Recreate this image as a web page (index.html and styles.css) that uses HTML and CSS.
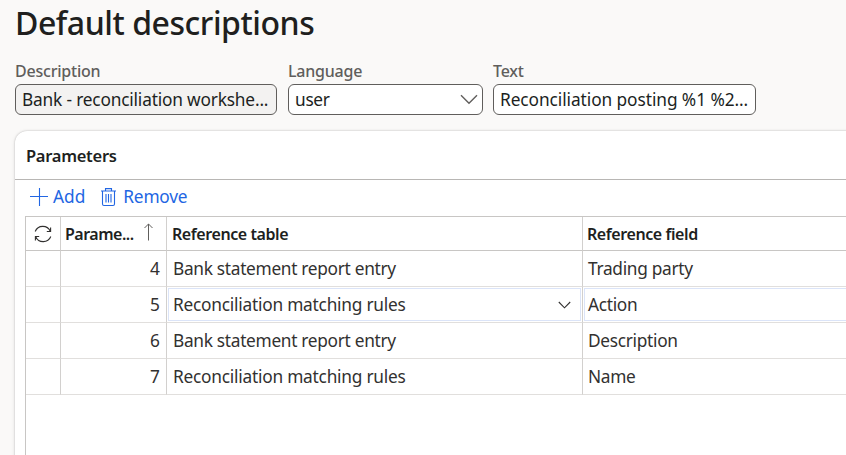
FILE: index.html
```html
<!DOCTYPE html>
<html lang="en">
<head>
<meta charset="utf-8">
<title>Default descriptions</title>
<link rel="stylesheet" href="styles.css">
</head>
<body>
<main class="page">
  <h1 class="title">Default descriptions</h1>
  <div class="fields">
    <div class="field field-description"><span class="label">Description</span><div class="input readonly"><span class="v-desc">Bank - reconciliation workshe...</span></div></div>
    <div class="field field-language"><span class="label">Language</span><div class="input"><span>user</span><svg class="chevron" width="18" height="11" viewBox="0 0 18 11"><path d="M1 1.3 9 9.2 17 1.3"/></svg></div></div>
    <div class="field field-text"><span class="label">Text</span><div class="input"><span class="v-text">Reconciliation posting %1 %2...</span></div></div>
  </div>
  <section class="card">
    <h2 class="card-title">Parameters</h2>
    <div class="toolbar">
      <span class="action"><svg class="plus" width="19" height="18" viewBox="0 0 19 18"><path d="M0 8.5H18M9.5 0V18"/></svg><span class="t-add">Add</span></span>
      <span class="action"><svg class="trash" width="16" height="19" viewBox="0 0 16 19"><path d="M1 3H16M5.5 3V.6H11.5V3M2.5 3V16Q2.5 17.5 4 17.5H13Q14.5 17.5 14.5 16V3M6 6V14.5M8.5 6V14.5M11 6V14.5"/></svg><span class="t-remove">Remove</span></span>
    </div>
    <div class="grid">
      <div class="row head">
        <div class="cell"><svg class="refresh" width="18" height="18" viewBox="0 0 18 18"><path d="M1.2 6.5A8.2 8.2 0 0 1 16.3 6.3M16.6 2.5V6.5H12.8M16.8 11.5A8.2 8.2 0 0 1 1.7 11.7M1.4 15.5V11.5H5.2"/></svg></div>
        <div class="cell"><span class="t-parame">Parame...</span><svg class="sort" width="10" height="18" viewBox="0 0 10 18"><path d="M4.5 .8V17.5M.5 5 4.5 1 8.5 5"/></svg></div>
        <div class="cell table-cell">Reference table</div>
        <div class="cell">Reference field</div>
      </div>
      <div class="row"><div class="cell"></div><div class="cell num">4</div><div class="cell table-cell">Bank statement report entry</div><div class="cell">Trading party</div></div>
      <div class="row"><div class="cell"></div><div class="cell num">5</div><div class="cell table-cell edit"><span class="t-rules">Reconciliation matching rules</span><svg class="drop" width="13" height="8" viewBox="0 0 13 8"><path d="M.8 1 6.5 6.8 12.2 1"/></svg></div><div class="cell edit">Action</div></div>
      <div class="row"><div class="cell"></div><div class="cell num">6</div><div class="cell table-cell">Bank statement report entry</div><div class="cell">Description</div></div>
      <div class="row"><div class="cell"></div><div class="cell num">7</div><div class="cell table-cell"><span class="t-rules">Reconciliation matching rules</span></div><div class="cell">Name</div></div>
    </div>
  </section>
</main>
</body>
</html>
```
FILE: styles.css
```css
* { box-sizing: border-box; }
body { margin: 0; width: 846px; height: 455px; overflow: hidden; background: #faf9f8; color: #323130; font: 17.3px/24px "Noto Sans", "Open Sans", sans-serif; white-space: nowrap; letter-spacing: -0.3px; }
.page { height: 455px; padding-left: 15px; display: flex; flex-direction: column; overflow: hidden; }
.title { flex: none; margin: 0; height: 60px; padding-top: 1px; font-size: 32px; line-height: 44px; font-weight: 500; letter-spacing: -0.45px; color: #201f1e; }
.fields { flex: none; display: flex; height: 71px; }
.field { display: flex; flex-direction: column; }
.field-description { width: 262px; margin-right: 11px; }
.field-language { width: 195px; margin-right: 10px; }
.field-text { width: 263px; }
.label { height: 24px; line-height: 23px; font-size: 16px; font-weight: 500; letter-spacing: -0.22px; color: #605e5c; }
.input { height: 31px; border: 1px solid #605e5c; border-radius: 6px; background: #fff; color: #201f1e; padding: 0 4px 0 6px; display: flex; align-items: center; justify-content: space-between; }
.readonly { background: #f3f2f1; }
.v-desc { letter-spacing: -0.18px; }
.v-text { letter-spacing: -0.07px; }
svg { fill: none; flex: none; }
.chevron { stroke: #605e5c; stroke-width: 1.4; }
.card { flex: none; width: 860px; height: 340px; background: #fff; border-radius: 12px 0 0 0; box-shadow: 0 0 2px rgba(0,0,0,.25), 0 1px 5px rgba(0,0,0,.08); }
.card-title { margin: 0; height: 49px; padding-left: 11px; line-height: 49px; font-size: 16.5px; font-weight: 600; letter-spacing: -0.28px; color: #201f1e; border-bottom: 1px solid #b8b6b4; }
.toolbar { height: 36px; padding: 0 0 2px 15px; display: flex; align-items: center; gap: 15px; color: #2266e3; }
.action { display: flex; align-items: center; gap: 4px; }
.t-add { letter-spacing: 0; }
.t-remove { margin-left: 3px; letter-spacing: -0.2px; }
.plus, .trash { stroke: #2266e3; stroke-width: 1.1; }
.grid { margin-left: 10px; height: 260px; border-left: 1px solid #c8c6c4; border-top: 1px solid #c8c6c4; }
.row { display: grid; grid-template-columns: 35px 106px 416px 1fr; height: 36px; }
.head { height: 34px; font-size: 16px; font-weight: 600; color: #201f1e; letter-spacing: -0.42px; }
.cell { border-right: 1px solid #d2d0ce; border-bottom: 1px solid #e1dfdd; padding-left: 5px; display: flex; align-items: center; }
.table-cell { padding-left: 6px; }
.head .cell { padding-left: 4px; border-bottom-color: #c8c6c4; }
.head .table-cell { padding-left: 5px; }
.head .cell:first-child { padding-left: 8px; }
.row .num { justify-content: flex-end; padding-right: 6px; letter-spacing: 0; }
.t-parame { letter-spacing: -0.5px; }
.t-rules { letter-spacing: -0.23px; }
.refresh { stroke: #323130; stroke-width: 1.1; }
.sort { stroke: #605e5c; stroke-width: 1; margin-left: 10px; margin-top: -3px; }
.edit { box-shadow: inset 0 0 0 1px #fff, inset 0 0 0 2px #dbe4f8; }
.drop { stroke: #323130; stroke-width: 1.1; margin-left: auto; margin-right: 11px; }
```
